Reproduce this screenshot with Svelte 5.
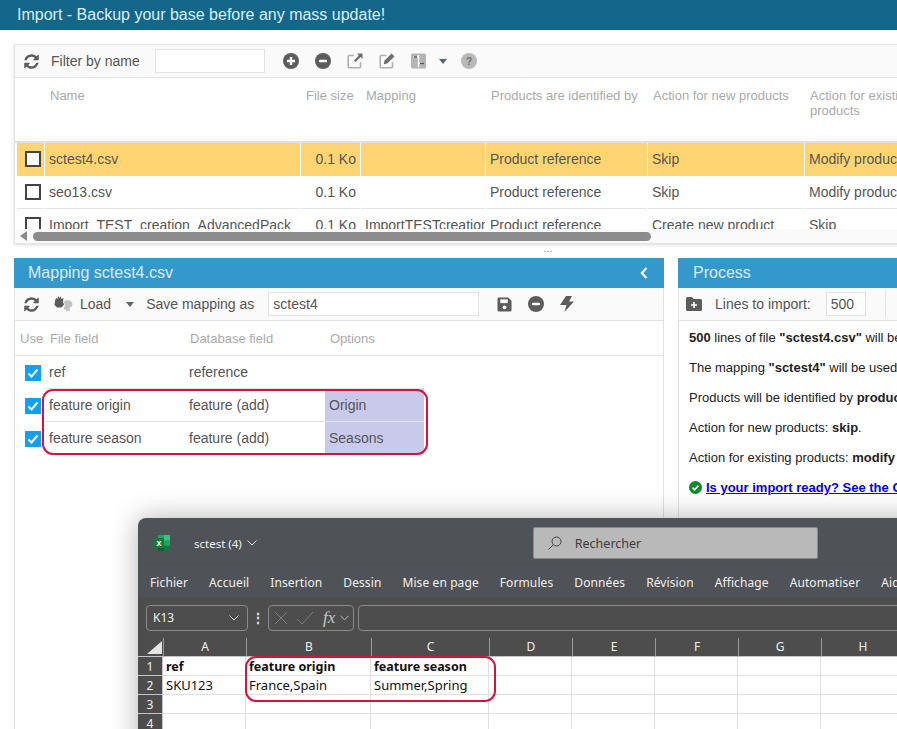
<script>
  const fileColumns = ["", "Name", "File size", "Mapping", "Products are identified by", "Action for new products", "Action for existing products"];
  const files = [
    { name: "sctest4.csv", size: "0.1 Ko", mapping: "", id: "Product reference", add: "Skip", edit: "Modify products", selected: true },
    { name: "seo13.csv", size: "0.1 Ko", mapping: "", id: "Product reference", add: "Skip", edit: "Modify products" },
    { name: "Import_TEST_creation_AdvancedPack", size: "0.1 Ko", mapping: "ImportTESTcreation", id: "Product reference", add: "Create new product", edit: "Skip" },
  ];
  const fields = [
    { file: "ref", db: "reference", option: "" },
    { file: "feature origin", db: "feature (add)", option: "Origin" },
    { file: "feature season", db: "feature (add)", option: "Seasons" },
  ];
  const menu = ["Fichier", "Accueil", "Insertion", "Dessin", "Mise en page", "Formules", "Données", "Révision", "Affichage", "Automatiser", "Aide"];
  const letters = ["A", "B", "C", "D", "E", "F", "G", "H"];
  const sheet = [
    [{ t: "ref", b: true }, { t: "feature origin", b: true }, { t: "feature season", b: true }],
    [{ t: "SKU123" }, { t: "France,Spain" }, { t: "Summer,Spring" }],
    [],
    [],
  ];
  const refreshPath = "M1639 1056q0 5-1 7-64 268-268 434.5t-478 166.5q-146 0-282.5-55t-243.5-157l-129 129q-19 19-45 19t-45-19-19-45v-448q0-26 19-45t45-19h448q26 0 45 19t19 45-19 45l-137 137q71 66 161 102t187 36q134 0 250-65t186-179q11-17 53-117 8-23 30-23h192q13 0 22.5 9.5t9.5 22.5zm25-800v448q0 26-19 45t-45 19h-448q-26 0-45-19t-19-45 19-45l138-138q-148-137-349-137-134 0-250 65t-186 179q-11 17-53 117-8 23-30 23h-199q-13 0-22.5-9.5t-9.5-22.5v-7q65-268 270-434.5t480-166.5q146 0 284 55.5t245 156.5l130-129q19-19 45-19t45 19 19 45z";
</script>

{#snippet refresh()}
  <svg class="ico" viewBox="0 0 1792 1792" width="17" height="17"><path d={refreshPath} fill="#5c5c5c" /></svg>
{/snippet}

{#snippet minus()}
  <svg class="ico" viewBox="0 0 16 16" width="16" height="16"><circle cx="8" cy="8" r="8" fill="#5c5c5c" /><rect x="4" y="6.8" width="8" height="2.4" rx="0.8" fill="#fff" /></svg>
{/snippet}

{#snippet caret()}
  <svg class="caret" viewBox="0 0 8 5" width="8" height="5"><path d="M0 0h8L4 5z" fill="#5c6470" /></svg>
{/snippet}

<div class="page">
  <header class="top">Import - Backup your base before any mass update!</header>

  <div class="content">
    <section class="files">
      <div class="toolbar">
        {@render refresh()}
        <span class="label filter-label">Filter by name</span>
        <input class="filter" />
        <span class="tools">
          <svg class="ico" viewBox="0 0 16 16" width="16" height="16"><circle cx="8" cy="8" r="8" fill="#5c5c5c" /><path d="M6.8 4h2.4v2.8H12v2.4H9.2V12H6.8V9.2H4V6.8h2.8z" fill="#fff" /></svg>
          {@render minus()}
          <svg class="ico" viewBox="0 0 16 16" width="16" height="16"><path d="M7 2.5H2.2a1 1 0 0 0-1 1v10.3a1 1 0 0 0 1 1h10.3a1 1 0 0 0 1-1V9" fill="none" stroke="#b0b0b0" stroke-width="1.6" /><path d="M10 .5h5.5V6l-1.9-1.9-5 5-1.7-1.7 5-5z" fill="#6e6e6e" /></svg>
          <svg class="ico" viewBox="0 0 16 16" width="16" height="16"><path d="M7.5 2.5H2.2a1 1 0 0 0-1 1v10.3a1 1 0 0 0 1 1h10.3a1 1 0 0 0 1-1V9" fill="none" stroke="#b0b0b0" stroke-width="1.6" /><path d="M12.6.6 15.4 3.4 8.2 10.6 4.8 11.2 5.4 7.8z" fill="#6e6e6e" /></svg>
          <svg class="ico" viewBox="0 0 16 16" width="16" height="16"><rect width="15" height="15" y="0.5" rx="1.5" fill="#b4b4b4" /><path d="M2.5 4h5M7.5 2v12M7.5 10.500h5" stroke="#fff" stroke-width="1.4" fill="none" /><path d="M3 4h3M9 10.500h4" stroke="#555" stroke-width="1.6" /></svg>
          <span class="caret-wrap">{@render caret()}</span>
          <svg class="ico" viewBox="0 0 16 16" width="16" height="16"><circle cx="8" cy="8" r="8" fill="#b9b9b9" /><text x="8" y="11.500" text-anchor="middle" class="help">?</text></svg>
        </span>
      </div>

      <div class="file-head file-grid">
        {#each fileColumns as col}
          <div class="th">{col}</div>
        {/each}
      </div>

      <div class="file-rows">
        {#each files as f}
          <div class="file-row file-grid" class:selected={f.selected}>
            <div class="td box-cell"><span class="box"></span></div>
            <div class="td">{f.name}</div>
            <div class="td num">{f.size}</div>
            <div class="td">{f.mapping}</div>
            <div class="td">{f.id}</div>
            <div class="td">{f.add}</div>
            <div class="td">{f.edit}</div>
          </div>
        {/each}
      </div>

      <div class="scrollbar">
        <svg viewBox="0 0 7 10" width="7" height="10"><path d="M7 0v10L0 5z" fill="#8c8c8c" /></svg>
        <span class="thumb"></span>
      </div>
    </section>

    <div class="grip">...</div>

    <div class="lower">
      <section class="mapping">
        <div class="title">
          <span>Mapping sctest4.csv</span>
          <svg viewBox="0 0 8 12" width="8" height="12"><path d="M6.500 1 1.800 6l4.700 5" fill="none" stroke="#fff" stroke-width="2.200" /></svg>
        </div>
        <div class="toolbar">
          {@render refresh()}
          <svg class="ico load-ico" viewBox="0 0 22 18" width="22" height="18">
            <path d="M2 6 3 3l1.500 1L5 1l1.500 2L8 1.500 8.500 4l2-1-.5 4 1 2.500-2.500 3H4L1.500 10z" fill="#5c5c5c" />
            <path d="M11 6.500c3-2.500 8-1.500 8.500 2.500 0 2.500-1.500 3.500-3 3.500l.5 3.500h-1.500l-.5-2-.5 2.500h-1.500l-.5-3-1 1.500-1-1 1.500-3.500z" fill="#c2c2c2" />
          </svg>
          <span class="label load-label">Load</span>
          <span class="caret-wrap load-caret">{@render caret()}</span>
          <span class="label save-label">Save mapping as</span>
          <input class="map-name" value="sctest4" />
          <span class="map-tools">
            <svg class="ico" viewBox="0 0 16 16" width="15" height="15"><path d="M2 .5h10L15.500 4v10a1.500 1.500 0 0 1-1.500 1.500H2A1.500 1.500 0 0 1 .5 14V2A1.500 1.500 0 0 1 2 .5z" fill="#5c5c5c" /><rect x="3.500" y="2.500" width="8" height="4" fill="#fff" /><circle cx="8" cy="11" r="2" fill="#fff" /></svg>
            {@render minus()}
            <svg class="ico" viewBox="0 0 14 16" width="14" height="16"><path d="M6 0h6L9 5.500h5L4.500 16 6.500 9H0z" fill="#5c5c5c" /></svg>
          </span>
        </div>
        <div class="map-head map-grid">
          <div>Use</div><div>File field</div><div>Database field</div><div>Options</div>
        </div>
        <div class="map-rows">
          {#each fields as field}
            <div class="map-row map-grid">
              <div class="check-cell">
                <svg viewBox="0 0 16 16" width="16" height="16"><rect width="16" height="16" fill="#12a0f0" /><path d="M3.500 8.500 6.500 11.500 12.500 4.500" fill="none" stroke="#fff" stroke-width="2" /></svg>
              </div>
              <div class="cell">{field.file}</div>
              <div class="cell">{field.db}</div>
              <div class="cell opt" class:filled={field.option}>{field.option}</div>
            </div>
          {/each}
          <div class="ring ring-map"></div>
        </div>
      </section>

      <section class="process">
        <div class="title"><span>Process</span></div>
        <div class="toolbar">
          <svg class="ico" viewBox="0 0 16 14" width="16" height="14"><path d="M1.500 0h4.500l1.500 2h7A1.500 1.500 0 0 1 16 3.500v9a1.500 1.500 0 0 1-1.500 1.500h-13A1.500 1.500 0 0 1 0 12.500v-11A1.500 1.500 0 0 1 1.500 0z" fill="#5c5c5c" /><path d="M7.200 5h1.600v2.200H11v1.600H8.800V11H7.200V8.800H5V7.200h2.200z" fill="#fff" /></svg>
          <span class="label lines-label">Lines to import:</span>
          <input class="lines" value="500" />
          <span class="divider"></span>
        </div>
        <div class="summary">
          <p><b>500</b> lines of file <b>"sctest4.csv"</b> will be imported.</p>
          <p>The mapping <b>"sctest4"</b> will be used.</p>
          <p>Products will be identified by <b>product reference</b>.</p>
          <p>Action for new products: <b>skip</b>.</p>
          <p>Action for existing products: <b>modify products</b>.</p>
          <p class="ready">
            <svg viewBox="0 0 14 14" width="13" height="13"><circle cx="7" cy="7" r="7" fill="#0a8a2a" /><path d="M3.800 7.200 6 9.400l4.200-4.400" fill="none" stroke="#fff" stroke-width="1.800" /></svg>
            <a href="#ready">Is your import ready? See the Checklist</a>
          </p>
        </div>
      </section>
    </div>
  </div>

  <div class="excel">
    <div class="xl-title">
      <svg class="xl-logo" viewBox="0 0 16 16" width="16" height="16">
        <rect x="4" y="0" width="12" height="16" rx="1" fill="#21a366" />
        <rect x="10" y="0" width="6" height="5.300" fill="#33c481" />
        <rect x="10" y="10.700" width="6" height="5.300" fill="#107c41" />
        <rect x="4" y="10.700" width="6" height="5.300" fill="#185c37" />
        <rect x="0" y="3" width="10" height="10" rx="1" fill="#107c41" />
        <text x="5" y="10.700" text-anchor="middle" class="xl-x">x</text>
      </svg>
      <span class="xl-name">sctest (4)</span>
      <svg viewBox="0 0 10 6" width="10" height="6"><path d="M.5.500 5 5l4.500-4.500" fill="none" stroke="#e8e8e8" stroke-width="1" /></svg>
      <div class="xl-search">
        <svg viewBox="0 0 14 14" width="14" height="14"><circle cx="8.500" cy="5.500" r="4.500" fill="none" stroke="#444" stroke-width="1" /><path d="M5.300 8.700.5 13.500" stroke="#444" stroke-width="1" /></svg>
        <span>Rechercher</span>
      </div>
    </div>
    <nav class="xl-menu">
      {#each menu as item}
        <span>{item}</span>
      {/each}
    </nav>
    <div class="xl-formula">
      <div class="xl-namebox">
        <span>K13</span>
        <svg viewBox="0 0 10 6" width="10" height="6"><path d="M.5.500 5 5l4.500-4.500" fill="none" stroke="#ddd" stroke-width="1" /></svg>
      </div>
      <span class="xl-dots">⋮</span>
      <div class="xl-fx">
        <svg viewBox="0 0 44 14" width="44" height="14"><path d="M1 1l12 12M13 1 1 13M23 8l5 5 11-12" fill="none" stroke="#7c7c7c" stroke-width="1" /></svg>
        <i>fx</i>
        <svg viewBox="0 0 10 6" width="9" height="6"><path d="M.5.500 5 5l4.500-4.500" fill="none" stroke="#ccc" stroke-width="1" /></svg>
      </div>
      <div class="xl-input"></div>
    </div>
    <div class="xl-sheet">
      <div class="xl-corner"><svg viewBox="0 0 15 13" width="15" height="13"><path d="M15 0v13H0z" fill="#e4e4e4" /></svg></div>
      {#each letters as l}
        <div class="xl-col">{l}</div>
      {/each}
      {#each sheet as row, r}
        <div class="xl-rownum">{r + 1}</div>
        {#each letters as _, c}
          <div class="xl-cell" class:bold={row[c]?.b}>{row[c]?.t ?? ""}</div>
        {/each}
      {/each}
      <div class="ring ring-xl"></div>
    </div>
  </div>
</div>

<style>
  :global(body) { overflow: hidden; background: #fff; }
  .page { position: relative; width: 897px; height: 729px; overflow: hidden; font-family: "Liberation Sans", Arial, sans-serif; font-size: 14px; color: #555; background: #fff; }
  .top { height: 30px; padding-left: 17px; background: #156789; color: #d9eef7; font-size: 16px; line-height: 29px; }
  .content { padding: 14px 0 0 14px; width: 1100px; }
  .ico { flex: none; display: block; }
  .toolbar { display: flex; align-items: center; height: 32px; padding-left: 8px; background: #fafafa; }
  input { box-sizing: border-box; height: 24px; border: 1px solid #e2e2e2; background: #fff; font: 14px "Liberation Sans", Arial, sans-serif; color: #555; padding: 0 4px; outline: none; }

  .files { width: 1000px; height: 198px; display: flex; flex-direction: column; border: 1px solid #e4e4e4; box-shadow: 0 1px 3px rgba(0, 0, 0, 0.15); overflow: hidden; }
  .files .toolbar { flex: none; border-bottom: 1px solid #e4e4e4; }
  .filter-label { margin-left: 11px; }
  .filter { width: 110px; margin-left: 15px; }
  .tools { display: flex; align-items: center; margin-left: 18px; gap: 16px; }
  .caret-wrap { display: flex; }
  .tools .caret-wrap { margin: 0 -2px 0 -4px; }
  .help { font: bold 10px "Liberation Sans", sans-serif; fill: #6e6e6e; }

  .file-grid { display: grid; grid-template-columns: 27px 255px 59px 124px 161px 156px 140px; column-gap: 1px; padding-left: 2px; }
  .file-head { flex: none; height: 65px; border-bottom: 2px solid #e0e0e0; box-sizing: border-box; }
  .th { padding: 10px 5px 0; font-size: 13px; line-height: 15px; color: #aaa; }
  .file-rows { flex: none; height: 86px; overflow: hidden; }
  .file-row { height: 33px; }
  .td { height: 32px; line-height: 33px; padding: 0 4px; white-space: nowrap; overflow: hidden; border-bottom: 1px solid #e4e4e4; }
  .selected .td { background: #ffd573; border-bottom-color: transparent; }
  .num { text-align: right; }
  .box-cell { display: flex; align-items: center; justify-content: flex-end; padding: 0 3px 0 0; }
  .box { box-sizing: border-box; width: 16px; height: 16px; background: #fff; border: 2px solid #444; }
  .scrollbar { flex: none; height: 14px; display: flex; align-items: center; gap: 6px; padding-left: 5px; background: #fafafa; }
  .thumb { width: 618px; height: 9px; border-radius: 5px; background: #8c8c8c; }

  .grip { height: 14px; text-align: center; width: 1068px; font-size: 11px; line-height: 8px; color: #888; }

  .lower { display: flex; gap: 14px; }
  .title { display: flex; align-items: center; justify-content: space-between; height: 30px; padding: 0 16px 0 14px; background: #3498cc; color: #d9eef7; font-size: 16px; }
  .mapping { box-sizing: border-box; width: 650px; height: 480px; border: solid #e2e2e2; border-width: 0 1px; }
  .mapping .title { margin: 0 -1px; }
  .mapping .toolbar { border-bottom: 1px solid #e2e2e2; }
  .load-ico { margin-left: 13px; }
  .load-label { margin-left: 5px; }
  .load-caret { margin-left: 15px; }
  .save-label { margin-left: 12px; }
  .map-name { width: 211px; margin-left: 14px; }
  .map-tools { display: flex; align-items: center; gap: 16px; margin-left: 18px; }
  .map-grid { display: grid; grid-template-columns: 30px 140px 140px 99px; }
  .map-head { height: 35px; line-height: 36px; border-bottom: 1px solid #e2e2e2; font-size: 13px; color: #aaa; box-sizing: border-box; }
  .map-head > div { padding-left: 5px; }
  .map-rows { position: relative; }
  .map-row { height: 33px; }
  .check-cell { display: flex; align-items: center; padding-left: 10px; }
  .cell { box-sizing: border-box; line-height: 32px; padding-left: 4px; border-bottom: 1px solid #e2e2e2; }
  .opt.filled { background: #c9c9ec; }

  .ring { position: absolute; box-sizing: border-box; border: 2px solid #d7123f; }
  .ring-map { left: 27px; top: 33px; width: 386px; height: 66px; border-radius: 11px; }

  .process { box-sizing: border-box; width: 400px; height: 480px; border-left: 1px solid #e2e2e2; }
  .process .title { margin-left: -1px; padding-left: 15px; }
  .process .toolbar { border-bottom: 1px solid #e2e2e2; padding-left: 7px; }
  .lines-label { margin-left: 13px; }
  .lines { width: 40px; margin-left: 15px; }
  .divider { width: 1px; height: 26px; margin-left: 19px; background: #e2e2e2; }
  .summary { padding: 9px 10px; color: #222; font-size: 13px; }
  .summary p { margin: 0; height: 30px; line-height: 16px; white-space: nowrap; }
  .summary b { color: #222; }
  .ready { display: flex; align-items: flex-start; gap: 4px; }
  .ready svg { margin-top: 1px; }
  .ready a { color: #0000ee; font-weight: bold; }

  .excel { position: absolute; left: 138px; top: 518px; width: 800px; height: 240px; border-radius: 8px 0 0 0; background: #4f5257; box-shadow: 0 0 28px rgba(0, 0, 0, 0.3); font-family: "Noto Sans", "Open Sans", sans-serif; font-size: 12px; color: #f0f0f0; overflow: hidden; }
  .xl-title { display: flex; align-items: center; box-sizing: border-box; height: 47px; padding: 3px 0 0 16px; }
  .xl-logo { margin-right: 24px; }
  .xl-x { font: bold 9px "Liberation Sans", sans-serif; fill: #fff; }
  .xl-name { margin-right: 5px; font-size: 11.500px; }
  .xl-search { display: flex; align-items: center; gap: 13px; box-sizing: border-box; width: 285px; height: 32px; margin-left: 276px; padding-left: 14px; background: #b9b9b9; border: 1px solid #8a8a8a; border-radius: 2px; color: #3c3c3c; font-size: 12.500px; }
  .xl-menu { display: flex; gap: 21px; box-sizing: border-box; height: 32px; padding: 2px 0 0 12px; align-items: center; letter-spacing: 0.1px; box-shadow: 0 1px 2px rgba(0, 0, 0, 0.4); }
  .xl-formula { position: relative; display: flex; align-items: center; height: 41px; padding: 0 0 0 8px; box-sizing: border-box; background: #4d4d4d; }
  .xl-namebox { display: flex; align-items: center; justify-content: space-between; box-sizing: border-box; width: 102px; height: 26px; padding: 0 8px 0 6px; border: 1px solid #8a8a8a; border-radius: 4px; }
  .xl-dots { width: 20px; text-align: center; font-weight: bold; }
  .xl-fx { display: flex; align-items: center; box-sizing: border-box; width: 86px; height: 26px; padding-left: 5px; border: 1px solid #8a8a8a; border-radius: 4px; font: italic 17px "Liberation Serif", serif; color: #c8c8c8; }
  .xl-fx i { margin: 0 5px; }
  .xl-input { flex: 1; height: 26px; margin-left: 4px; box-sizing: border-box; border: 1px solid #8a8a8a; border-radius: 4px; }
  .xl-sheet { position: relative; display: grid; grid-template-columns: 25px 83px 125px 118px 83px 83px 83px 83px 83px; grid-template-rows: 19px repeat(4, 19px); background: #fff; }
  .xl-corner { display: flex; align-items: flex-end; justify-content: flex-end; padding: 0 1px 2px 0; background: #4d4d4d; border-bottom: 1px solid #c4c4c4; }
  .xl-col { background: #4d4d4d; text-align: center; line-height: 18px; border-left: 1px solid #9a9a9a; border-bottom: 1px solid #c4c4c4; }
  .xl-col:last-of-type { grid-column: 9; }
  .xl-rownum { box-sizing: border-box; background: #4d4d4d; text-align: center; line-height: 19px; border-bottom: 1px solid #c4c4c4; border-right: 1px solid #c4c4c4; }
  .xl-cell { box-sizing: border-box; padding-left: 3px; font-size: 13px; line-height: 19px; color: #111; border-right: 1px solid #e0e0e0; border-bottom: 1px solid #e0e0e0; white-space: nowrap; }
  .bold { font-weight: bold; font-size: 12.500px; }
  .ring-xl { left: 107px; top: 18px; width: 251px; height: 46px; border-radius: 11px; }
</style>
